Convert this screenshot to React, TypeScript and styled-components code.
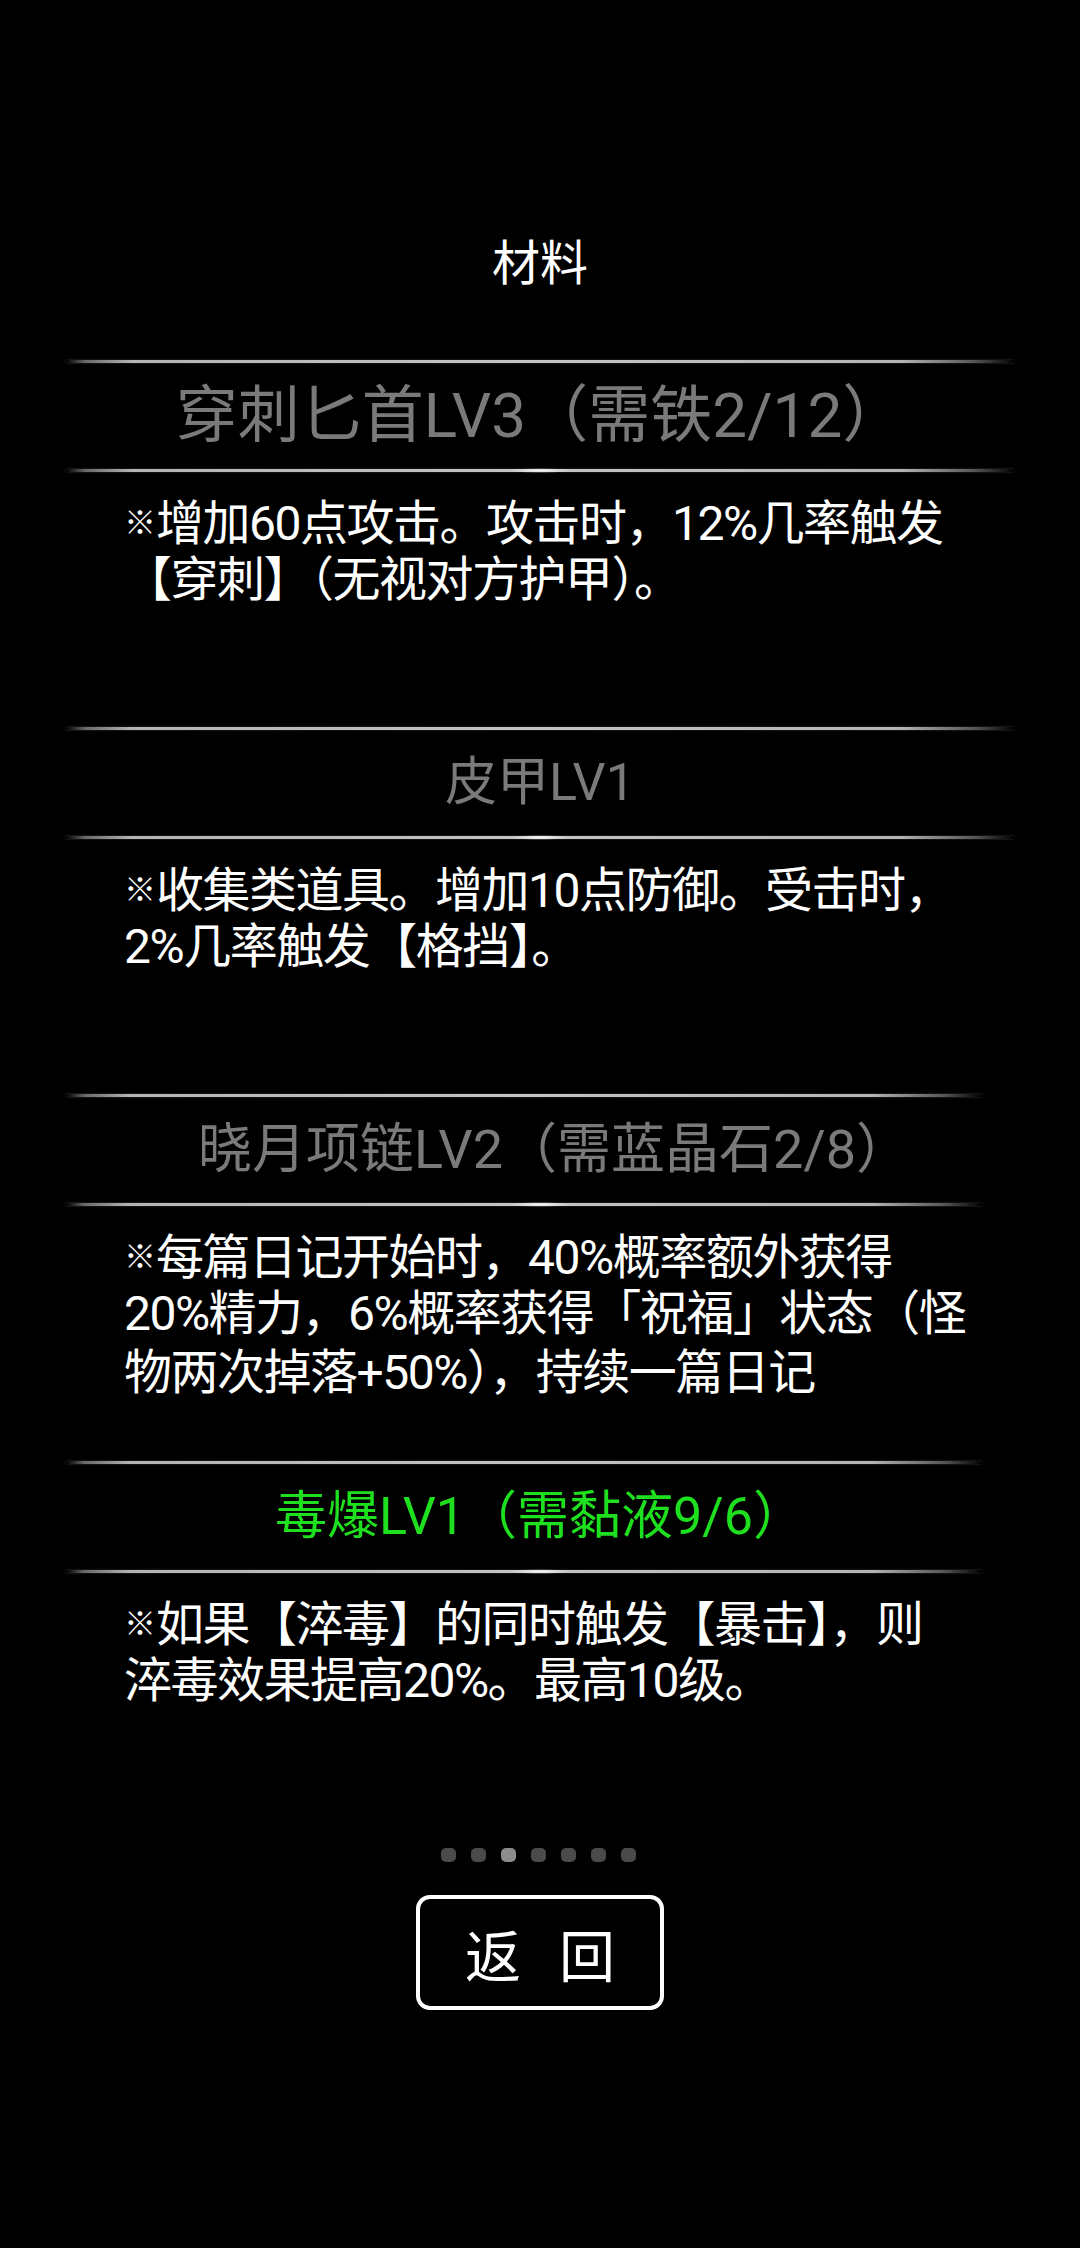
import React from "react";
import styled, { createGlobalStyle } from "styled-components";

const GlobalStyle = createGlobalStyle`
  html, body {
    margin: 0;
    padding: 0;
    background: #000;
  }
  body {
    font-family: Roboto, "Noto Sans CJK SC", sans-serif;
    -webkit-font-smoothing: antialiased;
  }
`;

type Skill = {
  name: string;
  size: number;
  shift?: number;
  tone: "muted" | "ready";
  short?: boolean;
  lines: string[];
};

const skills: Skill[] = [
  {
    name: "穿刺匕首LV3（需铁2/12）",
    size: 62,
    tone: "muted",
    lines: ["增加60点攻击。攻击时，12%几率触发", "【穿刺】（无视对方护甲）。"],
  },
  {
    name: "皮甲LV1",
    size: 52,
    tone: "muted",
    lines: ["收集类道具。增加10点防御。受击时，", "2%几率触发【格挡】。"],
  },
  {
    name: "晓月项链LV2（需蓝晶石2/8）",
    size: 54,
    shift: 14,
    tone: "muted",
    short: true,
    lines: [
      "每篇日记开始时，40%概率额外获得",
      "20%精力，6%概率获得「祝福」状态（怪",
      "物两次掉落+50%），持续一篇日记",
    ],
  },
  {
    name: "毒爆LV1（需黏液9/6）",
    size: 52,
    tone: "ready",
    short: true,
    lines: ["如果【淬毒】的同时触发【暴击】，则", "淬毒效果提高20%。最高10级。"],
  },
];

const PAGES = 7;
const CURRENT_PAGE = 2;

const Screen = styled.div`
  width: 1080px;
  min-height: 2248px;
  background: #000;
  display: flex;
  flex-direction: column;
  align-items: center;
`;

const Title = styled.h1`
  margin: 0;
  padding-top: 229px;
  height: 60px;
  margin-bottom: 71px;
  font-family: "Noto Sans CJK SC", sans-serif;
  font-weight: 400;
  font-size: 48px;
  line-height: 60px;
  color: #fff;
  text-align: center;
`;

const List = styled.div`
  width: 100%;
  display: flex;
  flex-direction: column;
`;

const Section = styled.section`
  height: 367px;
  display: flex;
  flex-direction: column;
`;

const Divider = styled.div<{ $short?: boolean; $glint?: boolean }>`
  position: relative;
  height: 3px;
  margin-left: 66px;
  width: ${(p) => (p.$short ? "916px" : "948px")};
  background: linear-gradient(
    90deg,
    rgba(150, 150, 150, 0) 0%,
    rgba(130, 130, 130, 0.8) 2%,
    #b4b4b4 7%,
    #c4c4c4 50%,
    #b4b4b4 88%,
    rgba(120, 120, 120, 0.7) 96%,
    rgba(120, 120, 120, 0) 100%
  );
  box-shadow: 0 0 2px rgba(200, 200, 200, 0.35);

  /* small bright highlight in the middle of the lower rule */
  &::after {
    content: "";
    display: ${(p) => (p.$glint ? "block" : "none")};
    position: absolute;
    left: 444px;
    top: -1px;
    width: 60px;
    height: 5px;
    background: radial-gradient(
      ellipse at center,
      rgba(255, 255, 255, 0.9) 0%,
      rgba(255, 255, 255, 0) 70%
    );
  }
`;

const Header = styled.div<{ $tone: "muted" | "ready"; $size: number; $shift: number }>`
  height: 106px;
  display: flex;
  align-items: center;
  justify-content: center;
  padding-left: ${(p) => p.$shift * 2}px;
  font-size: ${(p) => p.$size}px;
  line-height: 1;
  color: ${(p) => (p.$tone === "ready" ? "#1fe01f" : "#7a7a7a")};
  white-space: nowrap;
`;

const Body = styled.div`
  padding: 19px 0 0 124px;
  font-size: 48px;
  line-height: 59px;
  letter-spacing: -1.5px;
  color: #fff;
`;

const Line = styled.div`
  height: 59px;
  white-space: nowrap;
`;

const Mark = styled.span`
  font-family: "Noto Sans CJK SC", sans-serif;
  font-size: 32px;
  letter-spacing: 0;
  vertical-align: 6px;
`;

const Pager = styled.div`
  display: flex;
  gap: 15px;
  margin-top: 20px;
  margin-left: -3px;
`;

const Dot = styled.span<{ $active?: boolean }>`
  width: 15px;
  height: 14px;
  border-radius: 5px;
  background: ${(p) => (p.$active ? "#8c8c8c" : "#4a4a4a")};
`;

const BackButton = styled.button`
  margin-top: 33px;
  width: 248px;
  height: 115px;
  box-sizing: border-box;
  border: 4px solid #fff;
  border-radius: 14px;
  background: #000;
  color: #fff;
  font-family: "Noto Sans CJK SC", sans-serif;
  font-size: 56px;
  line-height: 1;
  display: flex;
  align-items: center;
  justify-content: center;
  gap: 38px;
  padding: 0;
  cursor: pointer;
`;

export default function App() {
  return (
    <>
      <GlobalStyle />
      <Screen>
        <Title>材料</Title>
        <List>
          {skills.map((s) => (
            <Section key={s.name}>
              <Divider $short={s.short} />
              <Header $tone={s.tone} $size={s.size} $shift={s.shift ?? 0}>
                {s.name}
              </Header>
              <Divider $short={s.short} $glint />
              <Body>
                {s.lines.map((line, i) => (
                  <Line key={i}>
                    {i === 0 && <Mark>※</Mark>}
                    {line}
                  </Line>
                ))}
              </Body>
            </Section>
          ))}
        </List>
        <Pager>
          {Array.from({ length: PAGES }, (_, i) => (
            <Dot key={i} $active={i === CURRENT_PAGE} />
          ))}
        </Pager>
        <BackButton type="button">
          <span>返</span>
          <span>回</span>
        </BackButton>
      </Screen>
    </>
  );
}
